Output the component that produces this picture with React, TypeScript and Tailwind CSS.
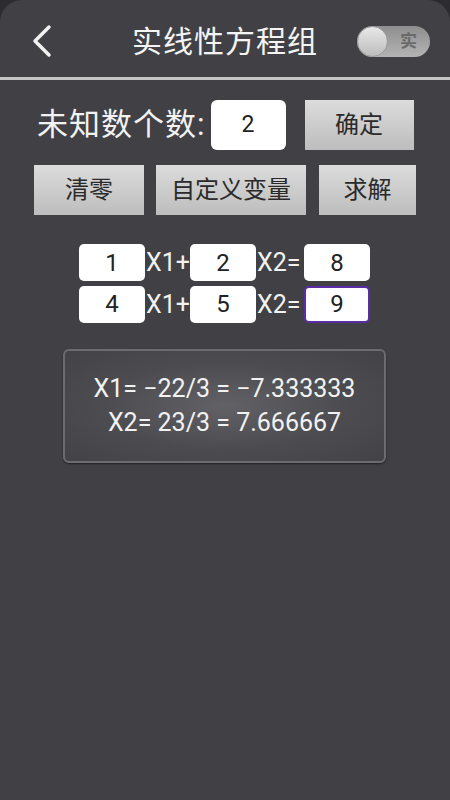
import React from 'react';

const font = { fontFamily: "Roboto, 'Noto Sans CJK SC', sans-serif" };

function Cell({ value, active }: { value: string; active?: boolean }) {
  return (
    <div
      className={`w-[66px] h-[37px] bg-white rounded-[5px] flex items-center justify-center text-[24px] text-[#222] ${
        active ? 'border-2 border-[#5a2ca8]' : ''
      }`}
    >
      {value}
    </div>
  );
}

function GrayButton({ label, className }: { label: string; className: string }) {
  return (
    <button
      className={`h-[50px] bg-gradient-to-b from-[#dcdcdc] to-[#bdbdbd] text-[24px] text-[#2a2a2a] flex items-center justify-center ${className}`}
    >
      {label}
    </button>
  );
}

export default function App() {
  return (
    <div className="w-[450px] h-[800px] bg-[#2c2c30]" style={font}>
      <div className="w-full h-full bg-[#414145] rounded-t-[22px] flex flex-col">
        {/* Header */}
        <div className="h-[77px] relative flex items-center justify-center">
          <svg className="absolute left-[31px] top-[24px]" width="22" height="34" viewBox="0 0 22 34">
            <path d="M18 3 L4 17 L18 31" fill="none" stroke="#f2f2f2" strokeWidth="3.5" strokeLinecap="round" strokeLinejoin="round" />
          </svg>
          <div className="text-[30px] text-[#f4f4f4] tracking-[1px] pt-[5px]">实线性方程组</div>
          <div className="absolute left-[357px] top-[26px] w-[73px] h-[31px] rounded-full bg-gradient-to-b from-[#8e8e8e] to-[#b4b4b4] flex items-center">
            <div className="w-[31px] h-[31px] rounded-full bg-gradient-to-b from-[#e8e8e8] to-[#bdbdbd] border border-[#9a9a9a]" />
            <div className="ml-[12px] text-[17px] font-bold text-[#6a6a6a]">实</div>
          </div>
        </div>
        <div className="h-[3px] bg-[#c4c4c4]" />

        {/* Count row */}
        <div className="flex items-center mt-[20px]">
          <div className="ml-[37px] text-[31px] tracking-[1px] text-[#f2f2f2]">未知数个数:</div>
          <div className="ml-[5px] w-[75px] h-[50px] bg-white rounded-[6px] flex items-center justify-center text-[23px] text-[#222]">
            2
          </div>
          <GrayButton label="确定" className="ml-[19px] w-[109px]" />
        </div>

        {/* Action row */}
        <div className="flex items-center mt-[15px] pl-[34px]">
          <GrayButton label="清零" className="w-[110px]" />
          <GrayButton label="自定义变量" className="ml-[12px] w-[150px]" />
          <GrayButton label="求解" className="ml-[13px] w-[97px]" />
        </div>

        {/* Equations */}
        <div className="flex flex-col gap-[4px] mt-[29px] pl-[79px]">
          {[
            ['1', '2', '8'],
            ['4', '5', '9'],
          ].map((row, i) => (
            <div key={i} className="flex items-center text-[25px] text-[#f2f2f2]">
              <Cell value={row[0]} />
              <span className="w-[45px] pl-[1px]">X1+</span>
              <Cell value={row[1]} />
              <span className="w-[48px] pl-[1px]">X2=</span>
              <Cell value={row[2]} active={i === 1} />
            </div>
          ))}
        </div>

        {/* Result */}
        <div className="ml-[63px] mt-[26px] w-[323px] h-[114px] rounded-[6px] border-2 border-[#6c6c70] bg-[radial-gradient(ellipse_at_center,#626266_0%,#4c4c50_55%,#434347_100%)] shadow-[0_1px_2px_rgba(0,0,0,0.5)] flex flex-col items-center justify-center text-[25px] leading-[34px] text-[#f2f2f2]">
          <div>X1= −22/3 = −7.333333</div>
          <div>X2= 23/3 = 7.666667</div>
        </div>
      </div>
    </div>
  );
}
